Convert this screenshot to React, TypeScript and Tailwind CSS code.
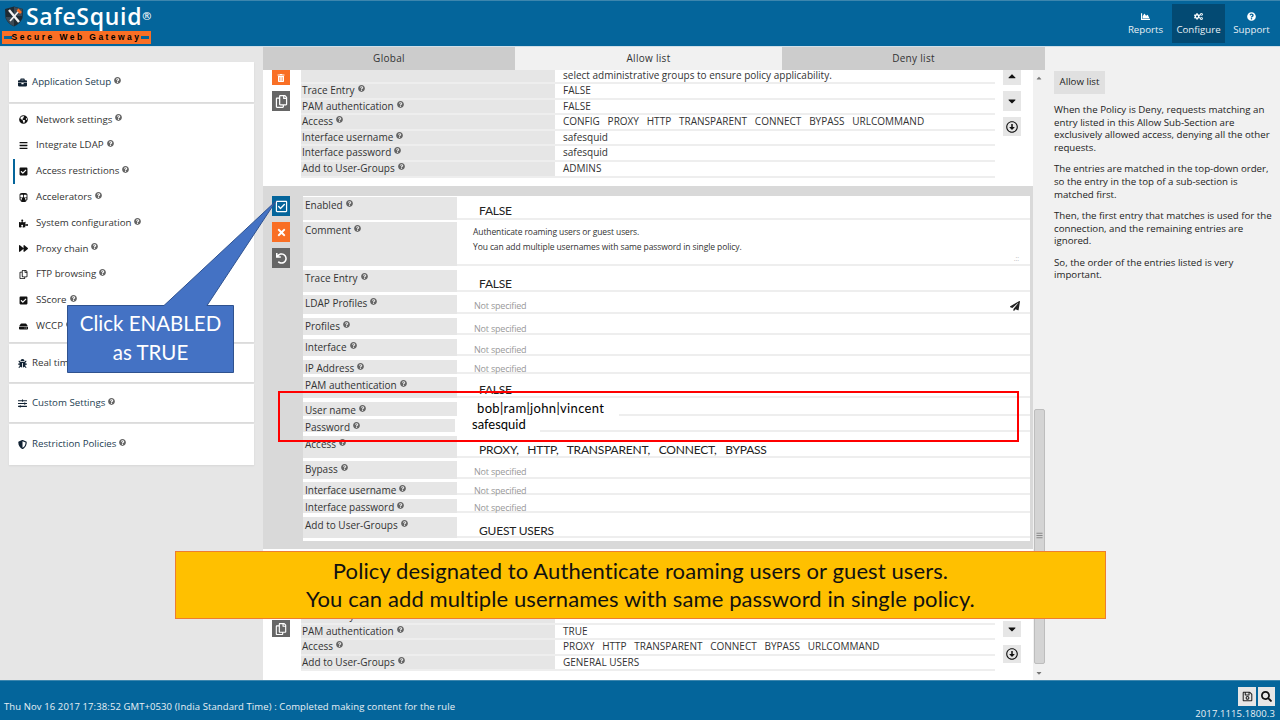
import type { ReactNode } from "react";
import {
  FaBars,
  FaBriefcase,
  FaBug,
  FaCaretDown,
  FaCaretUp,
  FaChartArea,
  FaCheckSquare,
  FaCogs,
  FaForward,
  FaGlobeAmericas,
  FaHdd,
  FaPaperPlane,
  FaPuzzlePiece,
  FaQuestionCircle,
  FaRegArrowAltCircleDown,
  FaRegCheckSquare,
  FaRegCopy,
  FaRegSave,
  FaSearch,
  FaShieldAlt,
  FaSlidersH,
  FaSubway,
  FaTimes,
  FaTrashAlt,
  FaUndo,
} from "react-icons/fa";

function Help() {
  return <FaQuestionCircle className="relative -top-[2px] inline-block ml-[3px] text-[7px] align-baseline text-[#666]" />;
}

const navItems = [
  { label: "Network settings", icon: <FaGlobeAmericas /> },
  { label: "Integrate LDAP", icon: <FaBars /> },
  { label: "Access restrictions", icon: <FaCheckSquare />, active: true },
  { label: "Accelerators", icon: <FaSubway /> },
  { label: "System configuration", icon: <FaPuzzlePiece /> },
  { label: "Proxy chain", icon: <FaForward /> },
  { label: "FTP browsing", icon: <FaRegCopy /> },
  { label: "SScore", icon: <FaCheckSquare /> },
  { label: "WCCP", icon: <FaHdd /> },
];

function Section({ label, icon, className }: { label: string; icon: ReactNode; className: string }) {
  return (
    <div className={`flex items-center bg-white pl-[9px] text-[#1d3d52] shadow-[0_1px_2px_rgba(0,0,0,0.07)] ${className}`}>
      <span className="w-[14px] text-[9px] text-[#123]">{icon}</span>
      <span>{label}</span>
      <Help />
    </div>
  );
}

function Sidebar() {
  return (
    <aside className="w-[263px] shrink-0 bg-[#e6e6e6] pl-[9px] pr-[9px] pt-[15px] text-[9.7px]">
      <Section label="Application Setup" icon={<FaBriefcase />} className="h-[40px] mb-[2px]" />
      <div className="h-[238px] bg-white pt-[3px] shadow-[0_1px_2px_rgba(0,0,0,0.07)] mb-[2px] text-[#333]">
        {navItems.map((item) => (
          <div key={item.label} className="relative flex items-center h-[25.8px] pl-[10px]">
            {item.active && <span className="absolute left-[4px] top-0 h-[25px] w-[2px] bg-[#04659b]" />}
            <span className="w-[17px] text-[9px] text-[#111]">{item.icon}</span>
            <span>{item.label}</span>
            <Help />
          </div>
        ))}
      </div>
      <Section label="Real time Reporting" icon={<FaBug />} className="h-[38px] mb-[2px] text-[#333]" />
      <Section label="Custom Settings" icon={<FaSlidersH />} className="h-[38px] mb-[2px]" />
      <Section label="Restriction Policies" icon={<FaShieldAlt />} className="h-[41px]" />
    </aside>
  );
}

function SideButton({ className, children }: { className: string; children: ReactNode }) {
  return <div className={`flex w-[18px] items-center justify-center ${className}`}>{children}</div>;
}

const topRows = [
  { label: "Trace Entry", value: "FALSE" },
  { label: "PAM authentication", value: "FALSE" },
  { label: "Access", value: "CONFIG   PROXY   HTTP   TRANSPARENT   CONNECT   BYPASS   URLCOMMAND" },
  { label: "Interface username", value: "safesquid" },
  { label: "Interface password", value: "safesquid" },
  { label: "Add to User-Groups", value: "ADMINS" },
];

const bottomRows = [
  { label: "PAM authentication", value: "TRUE" },
  { label: "Access", value: "PROXY   HTTP   TRANSPARENT   CONNECT   BYPASS   URLCOMMAND" },
  { label: "Add to User-Groups", value: "GENERAL USERS" },
];

function SmallRow({ label, value }: { label: string; value: string }) {
  return (
    <div className="flex h-[15.6px] border-b-[2px] border-[#eeeeee] leading-[13px]">
      <div className="w-[254px] bg-[#e6e6e6] pl-[1px]">
        {label}
        <Help />
      </div>
      <div className="flex-1 bg-white pl-[8px] whitespace-pre">{value}</div>
    </div>
  );
}

type DetailRow = {
  label: string;
  box: string;
  kind: "big" | "none" | "comment" | "user" | "pass" | "pam";
  value?: string;
  tight?: boolean;
};

const detailRows: DetailRow[] = [
  { label: "Enabled", box: "h-[23px] mb-[2px]", kind: "big", value: "FALSE" },
  { label: "Comment", box: "h-[44px] mb-[4px]", kind: "comment" },
  { label: "Trace Entry", box: "h-[22px] mb-[3px]", kind: "big", value: "FALSE" },
  { label: "LDAP Profiles", box: "h-[19px] mb-[4px]", kind: "none" },
  { label: "Profiles", box: "h-[17px] mb-[4px]", kind: "none" },
  { label: "Interface", box: "h-[17px] mb-[4px]", kind: "none" },
  { label: "IP Address", box: "h-[14px] mb-[3px]", kind: "none", tight: true },
  { label: "PAM authentication", box: "h-[21px] mb-[4px]", kind: "pam" },
  { label: "User name", box: "h-[14px] mb-[3px]", kind: "user" },
  { label: "Password", box: "h-[13px] mb-[4px]", kind: "pass" },
  { label: "Access", box: "h-[22px] mb-[3px]", kind: "big", value: "PROXY,   HTTP,   TRANSPARENT,   CONNECT,   BYPASS" },
  { label: "Bypass", box: "h-[18px] mb-[3px]", kind: "none" },
  { label: "Interface username", box: "h-[13px] mb-[4px]", kind: "none", tight: true },
  { label: "Interface password", box: "h-[14px] mb-[4px]", kind: "none", tight: true },
  { label: "Add to User-Groups", box: "h-[21px]", kind: "big", value: "GUEST USERS" },
];

function DetailValue({ row }: { row: DetailRow }) {
  if (row.kind === "big") {
    return <div className="pl-[22px] pt-[6px] font-['Lato'] text-[12px] leading-[16px] tracking-[-0.2px] whitespace-pre text-[#222]">{row.value}</div>;
  }
  if (row.kind === "pam") {
    return <div className="ml-[22px] mt-[5px] h-[12px] overflow-hidden font-['Lato'] text-[12px] leading-[16px] tracking-[-0.2px] text-[#222]">FALSE</div>;
  }
  if (row.kind === "user") {
    return <div className="w-[162px] bg-white pl-[20px] -mt-[3px] h-[18px] font-['Lato'] text-[13px] leading-[18px] tracking-[0.35px] text-black">bob|ram|john|vincent</div>;
  }
  if (row.kind === "pass") {
    return <div className="w-[85px] -ml-[2px] bg-white pl-[17px] -mt-[3px] h-[16px] font-['Lato'] text-[13px] leading-[16px] text-black">safesquid</div>;
  }
  if (row.kind === "comment") {
    return (
      <div className="relative h-[42px] pl-[16px] pt-[3px] text-[8.5px] leading-[14.5px] tracking-[-0.1px] text-[#333]">
        <div>Authenticate roaming users or guest users.</div>
        <div>You can add multiple usernames with same password in single policy.</div>
        <span className="absolute right-[11px] bottom-[1px] text-[7px] leading-[8px] text-[#bbb]">.::</span>
      </div>
    );
  }
  return (
    <div className={`relative pl-[17px] text-[9px] leading-[12px] tracking-[-0.2px] text-[#999] ${row.tight ? "pt-[3px]" : "pt-[5px]"}`}>
      Not specified
      {row.label === "LDAP Profiles" && <FaPaperPlane className="absolute right-[10px] top-[6px] text-[10px] text-[#222]" />}
    </div>
  );
}

function PolicyPane() {
  return (
    <div className="w-[770px] shrink-0 overflow-hidden bg-white text-[10px] text-[#333]">
      {/* first policy, scrolled partly away */}
      <div className="flex h-[116px] pl-[9px]">
        <div className="flex w-[29px] shrink-0 flex-col">
          <SideButton className="h-[15px] bg-[#f96f25] text-[8px] text-white">
            <FaTrashAlt />
          </SideButton>
          <SideButton className="mt-[6px] h-[20px] bg-[#666666] text-[13px] text-white">
            <FaRegCopy />
          </SideButton>
        </div>
        <div className="w-[694px] shrink-0">
          <div className="flex h-[14px] border-b-[2px] border-[#eeeeee] leading-[11px]">
            <div className="w-[254px] bg-[#e6e6e6]" />
            <div className="pl-[8px]">select administrative groups to ensure policy applicability.</div>
          </div>
          {topRows.map((row) => (
            <SmallRow key={row.label} {...row} />
          ))}
        </div>
        <div className="ml-[8px] flex flex-col">
          <SideButton className="h-[15px] items-start bg-[#e6e6e6] text-[12px] text-[#111]">
            <FaCaretUp />
          </SideButton>
          <SideButton className="mt-[6px] h-[20px] bg-[#e6e6e6] text-[12px] text-[#111]">
            <FaCaretDown />
          </SideButton>
          <SideButton className="mt-[6px] h-[19px] bg-[#e6e6e6] text-[12px] text-[#111]">
            <FaRegArrowAltCircleDown />
          </SideButton>
        </div>
      </div>

      {/* policy being edited */}
      <div className="flex h-[363px] bg-[#d9d9d9] pl-[9px] pt-[10px]">
        <div className="flex w-[31px] shrink-0 flex-col">
          <SideButton className="h-[20px] bg-[#04659b] text-[13px] text-white">
            <FaRegCheckSquare />
          </SideButton>
          <SideButton className="mt-[6px] h-[20px] bg-[#f96f25] text-[11px] text-white">
            <FaTimes />
          </SideButton>
          <SideButton className="mt-[6px] h-[20px] bg-[#666666] text-[11px] text-white">
            <FaUndo />
          </SideButton>
        </div>
        <div className="h-[345px] w-[727px] bg-white pt-[1px]">
          {detailRows.map((row) => (
            <div key={row.label} className={`flex ${row.box}`}>
              <div className="w-[154px] shrink-0 bg-[#e6e6e6] pl-[2px] pt-[2px] leading-[13px]">
                {row.label}
                <Help />
              </div>
              <div className="flex-1 border-b-[2px] border-[#eeeeee]">
                <DetailValue row={row} />
              </div>
            </div>
          ))}
        </div>
      </div>

      {/* next policy */}
      <div className="flex pl-[9px] pt-[60px]">
        <div className="w-[29px] shrink-0 pt-[11px]">
          <SideButton className="h-[17px] bg-[#666666] text-[12px] text-white">
            <FaRegCopy />
          </SideButton>
        </div>
        <div className="w-[694px] shrink-0">
          <SmallRow label="Trace Entry" value="FALSE" />
          {bottomRows.map((row) => (
            <SmallRow key={row.label} {...row} />
          ))}
        </div>
        <div className="ml-[8px] flex flex-col pt-[12px]">
          <SideButton className="h-[16px] bg-[#e6e6e6] text-[12px] text-[#111]">
            <FaCaretDown />
          </SideButton>
          <SideButton className="mt-[8px] h-[18px] bg-[#e6e6e6] text-[12px] text-[#111]">
            <FaRegArrowAltCircleDown />
          </SideButton>
        </div>
      </div>
    </div>
  );
}

function Scrollbar() {
  return (
    <div className="relative flex w-[12px] shrink-0 flex-col justify-between bg-[#f1f1f1] pb-[3px] text-[8px] text-[#777]">
      <FaCaretUp className="ml-[2px] mt-[4px]" />
      <div className="absolute left-[1px] top-[339px] flex h-[255px] w-[11px] flex-col items-center justify-end rounded-[2px] border border-[#bdbdbd] bg-[#d4d4d4] pb-[124px]">
        <FaBars className="text-[7px] text-[#888]" />
      </div>
      <FaCaretDown className="ml-[2px]" />
    </div>
  );
}

function HelpPanel() {
  return (
    <aside className="flex-1 bg-[#f1f1f1] pl-[9px] pr-[2px] pt-[24px] text-[9.7px] leading-[12.7px] text-[#222]">
      <div className="mb-[10px] flex h-[23px] w-[51px] items-center justify-center bg-[#e0e0e0]">Allow list</div>
      <p className="mb-[8.5px]">
        When the Policy is Deny, requests matching an
        <br />
        entry listed in this Allow Sub-Section are
        <br />
        exclusively allowed access, denying all the other
        <br />
        requests.
      </p>
      <p className="mb-[8.5px]">
        The entries are matched in the top-down order,
        <br />
        so the entry in the top of a sub-section is
        <br />
        matched first.
      </p>
      <p className="mb-[8.5px]">
        Then, the first entry that matches is used for the
        <br />
        connection, and the remaining entries are
        <br />
        ignored.
      </p>
      <p>
        So, the order of the entries listed is very
        <br />
        important.
      </p>
    </aside>
  );
}

function TopBar() {
  const links = [
    { label: "Reports", icon: <FaChartArea />, active: false },
    { label: "Configure", icon: <FaCogs />, active: true },
    { label: "Support", icon: <FaQuestionCircle />, active: false },
  ];
  return (
    <header className="flex h-[47px] shrink-0 items-center justify-between border-t border-[#3d86ae] border-b border-b-[#d0dfe8] bg-[#04659b] pl-[2px] pr-[2px]">
      <div className="flex flex-col">
        <div className="flex h-[26px] items-center">
          <svg width="20" height="21" viewBox="0 0 20 21" className="ml-[2px]">
            <path d="M1 3 L10 0.5 L19 3 L18.5 12 Q16 18 10 20.5 Q4 18 1.5 12 Z" fill="#1f2a33" />
            <path d="M1.5 11 L10 11 L10 20 Q4 18 1.5 11 Z M10 1 L18.5 3 L18 10 L10 10 Z" fill="#3d4a55" />
            <path d="M5 4 L15 16" stroke="#f2f2f2" strokeWidth="2.4" />
            <path d="M15 5 L6 15" stroke="#f2f2f2" strokeWidth="1.6" />
            <path d="M13.5 3.5 L17 7" stroke="#f96f25" strokeWidth="2.6" />
          </svg>
          <span className="ml-[2px] -mt-[1px] text-[23px] leading-[24px] font-['Open_Sans'] font-semibold tracking-[0.7px] text-white">
            SafeSquid<sup className="text-[11px] tracking-normal">®</sup>
          </span>
        </div>
        <div className="mt-[1px] flex h-[13px] w-[149px] items-center justify-between bg-[#f96f25] px-[2px] font-['Liberation_Sans'] text-[8.5px] font-bold tracking-[2.45px] text-black">
          <span className="h-[3px] w-[9px] bg-[#04659b]" />
          <span className="whitespace-nowrap">Secure Web Gateway</span>
          <span className="h-[3px] w-[9px] bg-[#04659b]" />
        </div>
      </div>
      <nav className="flex h-[39px] items-stretch text-[9.7px] text-[#e8f0f5]">
        {links.map((link) => (
          <div key={link.label} className={`flex w-[53px] flex-col items-center justify-center gap-[3px] ${link.active ? "bg-[#034a73]" : ""}`}>
            <span className="text-[9px] text-white">{link.icon}</span>
            <span className="leading-[12px]">{link.label}</span>
          </div>
        ))}
      </nav>
    </header>
  );
}

function StatusBar() {
  return (
    <footer className="flex h-[40px] shrink-0 items-end justify-between border-t border-[#3d86ae] bg-[#04659b] pb-[1px] pl-[4px] pr-[5px] text-[9.5px] tracking-[0.1px] text-[#e8f0f5]">
      <div className="pb-[5px]">Thu Nov 16 2017 17:38:52 GMT+0530 (India Standard Time) : Completed making content for the rule</div>
      <div className="flex flex-col items-end gap-[2px]">
        <div className="flex gap-[2px]">
          <span className="flex h-[19px] w-[18px] items-center justify-center bg-[#e6e6e6] text-[11px] text-[#222]">
            <FaRegSave />
          </span>
          <span className="flex h-[19px] w-[17px] items-center justify-center bg-[#e6e6e6] text-[11px] text-[#111]">
            <FaSearch />
          </span>
        </div>
        <div className="leading-[11px]">2017.1115.1800.3</div>
      </div>
    </footer>
  );
}

// PowerPoint annotations laid over the screenshot
function Annotations() {
  return (
    <>
      <svg className="absolute left-0 top-0" width="1280" height="720">
        <polygon points="67.5,305.5 164,305.5 276,201 207,305.5 233.5,305.5 233.5,372.5 67.5,372.5" fill="#4472c4" stroke="#2f528f" strokeWidth="1" />
      </svg>
      <div className="absolute left-[67px] top-[308px] flex h-[60px] w-[167px] items-center justify-center text-center font-['Lato'] text-[20.5px] leading-[29px] text-white">
        Click ENABLED
        <br />
        as TRUE
      </div>
      <div className="absolute left-[278px] top-[391px] h-[51px] w-[741px] border-[2px] border-[#ff0000]" />
      <div className="absolute left-[175px] top-[551px] flex h-[68px] w-[931px] items-center justify-center border border-[#ed7d31] bg-[#ffc000] text-center font-['Lato'] text-[22px] leading-[28px] tracking-[0.1px] text-[#111]">
        Policy designated to Authenticate roaming users or guest users.
        <br />
        You can add multiple usernames with same password in single policy.
      </div>
    </>
  );
}

export default function App() {
  return (
    <div className="relative flex h-[720px] w-[1280px] flex-col overflow-hidden font-['Open_Sans',sans-serif]">
      <TopBar />
      <div className="flex min-h-0 flex-1">
        <Sidebar />
        <main className="flex w-[782px] shrink-0 flex-col">
          <div className="flex h-[23px] shrink-0 text-[10px] tracking-[0.3px] text-[#333]">
            <div className="flex w-[252px] items-center justify-center bg-[#cccccc]">Global</div>
            <div className="flex w-[267px] items-center justify-center bg-[#f1f1f1]">Allow list</div>
            <div className="flex flex-1 items-center justify-center bg-[#cccccc]">Deny list</div>
          </div>
          <div className="flex min-h-0 flex-1">
            <PolicyPane />
            <Scrollbar />
          </div>
        </main>
        <HelpPanel />
      </div>
      <StatusBar />
      <Annotations />
    </div>
  );
}
